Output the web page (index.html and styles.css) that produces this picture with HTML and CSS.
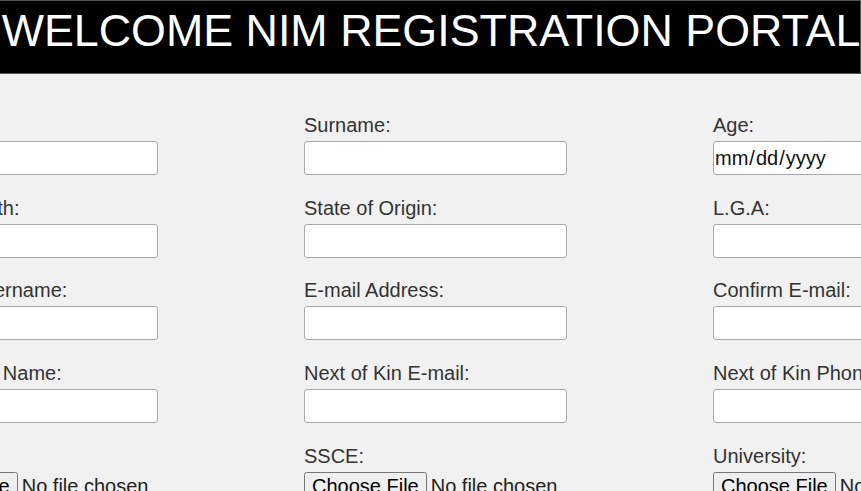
FILE: index.html
```html
<!DOCTYPE html>
<html>
<head>
<meta charset="utf-8">
<link rel="stylesheet" href="styles.css">
</head>
<body>
<header class="banner">
  <h1 class="banner-title">WELCOME NIM REGISTRATION PORTAL</h1>
</header>
<form class="reg-form">
  <div class="field"><label class="field-label">First Name:</label><input class="field-input" type="text"></div>
  <div class="field"><label class="field-label">Surname:</label><input class="field-input" type="text"></div>
  <div class="field"><label class="field-label">Age:</label><input class="field-input field-date" type="date"></div>

  <div class="field"><label class="field-label">Place of Birth:</label><input class="field-input" type="text"></div>
  <div class="field"><label class="field-label">State of Origin:</label><input class="field-input" type="text"></div>
  <div class="field"><label class="field-label">L.G.A:</label><input class="field-input" type="text"></div>

  <div class="field"><label class="field-label">Choose Username:</label><input class="field-input" type="text"></div>
  <div class="field"><label class="field-label">E-mail Address:</label><input class="field-input" type="email"></div>
  <div class="field"><label class="field-label">Confirm E-mail:</label><input class="field-input" type="email"></div>

  <div class="field"><label class="field-label">Next Of Kin Name:</label><input class="field-input" type="text"></div>
  <div class="field"><label class="field-label">Next of Kin E-mail:</label><input class="field-input" type="email"></div>
  <div class="field"><label class="field-label">Next of Kin Phone:</label><input class="field-input" type="text"></div>

  <div class="field"><label class="field-label">Passport:</label><input class="field-file" type="file"></div>
  <div class="field"><label class="field-label">SSCE:</label><input class="field-file" type="file"></div>
  <div class="field"><label class="field-label">University:</label><input class="field-file" type="file"></div>
</form>
</body>
</html>
```
FILE: styles.css
```css
html, body {
  margin: 0;
  padding: 0;
}
body {
  background: #f1f1f1;
  font-family: "Liberation Sans", Arial, sans-serif;
  overflow: hidden;
}
.banner {
  background: #000;
  height: 72px;
  border: 1px solid #555;
  border-left: none;
  box-sizing: content-box;
  display: flex;
  align-items: center;
  justify-content: center;
}
.banner-title {
  margin: 0 0 0 2px;
  color: #fff;
  font-weight: normal;
  font-size: 44.8px;
  white-space: nowrap;
  line-height: 1;
  padding-bottom: 13px;
}
.reg-form {
  display: grid;
  grid-template-columns: repeat(3, 263px);
  column-gap: 146px;
  row-gap: 21.7px;
  justify-content: center;
  padding: 40px 0 0 10px;
}
.field {
  display: flex;
  flex-direction: column;
  gap: 4px;
  align-items: flex-start;
}
.field-label {
  font-size: 20px;
  color: #333;
  line-height: 23px;
  white-space: nowrap;
}
.field-input {
  width: 263px;
  height: 34px;
  box-sizing: border-box;
  font-family: "Liberation Sans", Arial, sans-serif;
  font-size: 20px;
  color: #111;
  background: #fff;
  border: 1px solid #a8a8a8;
  border-radius: 3px;
  padding: 1px 1px;
  margin: 0;
}
.field-date {
  padding-left: 0;
}
.field-file {
  font-family: "Liberation Sans", Arial, sans-serif;
  font-size: 20px;
  color: #222;
  margin: 0;
}
```
